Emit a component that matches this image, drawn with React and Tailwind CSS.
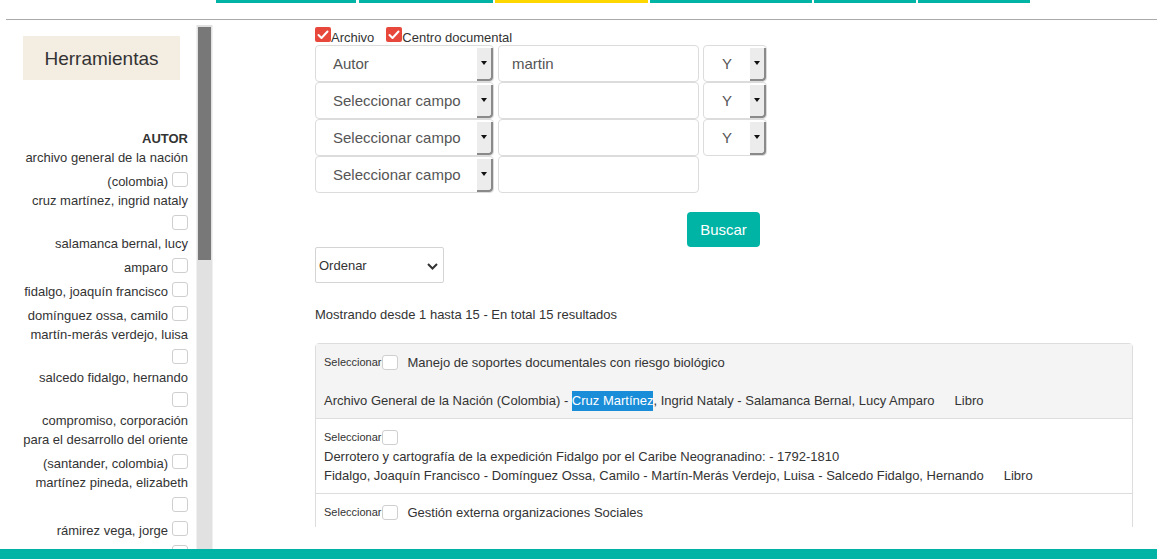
import React from "react";

function Box({ className = "" }) {
  return <span className={"inline-block w-[16px] h-[15px] border border-[#cfcfcf] rounded-[3px] bg-white shrink-0 " + className} />;
}

function RedCheck() {
  return (
    <span className="inline-flex items-center justify-center w-[16px] h-[15px] rounded-[2px] bg-[#e8473b] mb-[3px] shrink-0">
      <svg width="12" height="10" viewBox="0 0 12 10">
        <path d="M1.5 5 L4.5 8 L10.5 1.5" stroke="white" strokeWidth="2" fill="none" strokeLinecap="round" strokeLinejoin="round" />
      </svg>
    </span>
  );
}

function Line({ t, cb }) {
  if (!cb) return <div className="h-[19px] leading-[19px] whitespace-nowrap">{t}</div>;
  return (
    <div className="h-[24px] flex justify-end items-end whitespace-nowrap">
      {t && <span className="leading-[19px]">{t}</span>}
      <Box className="mb-[4px] ml-[4px]" />
    </div>
  );
}

const authorLines = [
  { t: "archivo general de la nación" },
  { t: "(colombia)", cb: true },
  { t: "cruz martínez, ingrid nataly" },
  { t: "", cb: true },
  { t: "salamanca bernal, lucy" },
  { t: "amparo", cb: true },
  { t: "fidalgo, joaquín francisco", cb: true },
  { t: "domínguez ossa, camilo", cb: true },
  { t: "martín-merás verdejo, luisa" },
  { t: "", cb: true },
  { t: "salcedo fidalgo, hernando" },
  { t: "", cb: true },
  { t: "compromiso, corporación" },
  { t: "para el desarrollo del oriente" },
  { t: "(santander, colombia)", cb: true },
  { t: "martínez pineda, elizabeth" },
  { t: "", cb: true },
  { t: "rámirez vega, jorge", cb: true },
  { t: "", cb: true },
];

function Arrow() {
  return (
    <div className="w-[16px] mt-[2px] bg-[#ececec] border-r-2 border-b-2 border-[#8a8a8a] rounded-br-[4px] flex items-center justify-center">
      <svg width="6" height="4" viewBox="0 0 6 4" className="mb-[2px]">
        <path d="M0 0 H6 L3 4 Z" fill="#111" />
      </svg>
    </div>
  );
}

function SelectBox({ label, w }) {
  return (
    <div className={"h-[37px] flex border border-[#dcdcdc] rounded-[4px] bg-white " + w}>
      <div className="flex-1 flex items-center pt-[2px] pl-[17px] text-[15px] text-[#555] whitespace-nowrap">{label}</div>
      <Arrow />
    </div>
  );
}

function YSelect() {
  return (
    <div className="h-[37px] w-[64px] flex border border-[#dcdcdc] rounded-[4px] bg-white">
      <div className="flex-1 flex items-center justify-center pt-[2px] text-[15px] text-[#555]">Y</div>
      <Arrow />
    </div>
  );
}

function Input({ value }) {
  return (
    <div className="h-[37px] w-[201px] flex items-center border border-[#dcdcdc] rounded-[4px] bg-white pl-[13px] pt-[2px] text-[15px] text-[#555]">
      {value}
    </div>
  );
}

function Sel() {
  return (
    <span className="inline-flex items-center">
      <span className="text-[11px]">Seleccionar</span>
      <Box className="ml-[1px]" />
    </span>
  );
}

export default function App() {
  return (
    <div className="w-[1157px] h-[559px] overflow-hidden bg-white flex flex-col text-[#333] font-['Liberation_Sans',Arial,sans-serif] text-[13px]">
      {/* top nav */}
      <div className="h-[19px] shrink-0 flex items-start pl-[216px]">
        <div className="h-[3px] w-[140px] bg-[#00b4a5]" />
        <div className="h-[3px] w-[134px] ml-[3px] bg-[#00b4a5]" />
        <div className="h-[3px] w-[153px] ml-[2px] bg-[#fed600]" />
        <div className="h-[3px] w-[162px] ml-[2px] bg-[#00b4a5]" />
        <div className="h-[3px] w-[102px] ml-[2px] bg-[#00b4a5]" />
        <div className="h-[3px] w-[112px] ml-[2px] bg-[#00b4a5]" />
      </div>
      <div className="h-px shrink-0 ml-[6px] bg-[#aaaaaa]" />

      <div className="flex-1 flex min-h-0">
        {/* sidebar */}
        <div className="ml-[6px] mt-[5px] flex min-h-0">
          <div className="w-[190px] overflow-hidden">
            <div className="ml-[17px] mt-[11px] w-[157px] h-[44px] pt-[3px] bg-[#f3ede2] flex items-center justify-center text-[19px] text-[#333]">
              Herramientas
            </div>
            <div className="mt-[49px] pr-[8px] text-right">
              <div className="h-[19px] leading-[19px] font-bold">AUTOR</div>
              {authorLines.map((l, i) => (
                <Line key={i} t={l.t} cb={l.cb} />
              ))}
            </div>
          </div>
          <div className="w-[17px] bg-[#e1e1e1] border-x border-[#f0f0f0] pt-[2px] px-[1px]">
            <div className="h-[233px] bg-[#787878]" />
          </div>
        </div>

        {/* main */}
        <div className="flex-1 pl-[102px] pt-[7px] min-w-0">
          <div className="h-[18px] flex items-end">
            <RedCheck />
            <span className="leading-[15px]">Archivo</span>
            <span className="ml-[12px] flex items-end">
              <RedCheck />
              <span className="leading-[15px]">Centro documental</span>
            </span>
          </div>

          <div className="flex flex-col">
            <div className="flex gap-[4px]">
              <SelectBox label="Autor" w="w-[179px]" />
              <Input value="martin" />
              <YSelect />
            </div>
            <div className="flex gap-[4px]">
              <SelectBox label="Seleccionar campo" w="w-[179px]" />
              <Input value="" />
              <YSelect />
            </div>
            <div className="flex gap-[4px]">
              <SelectBox label="Seleccionar campo" w="w-[179px]" />
              <Input value="" />
              <YSelect />
            </div>
            <div className="flex gap-[4px]">
              <SelectBox label="Seleccionar campo" w="w-[179px]" />
              <Input value="" />
            </div>
          </div>

          <div className="mt-[19px] ml-[372px] w-[73px] h-[35px] pt-[2px] rounded-[4px] bg-[#00b4a5] text-white text-[15px] flex items-center justify-center">
            Buscar
          </div>

          <div className="w-[129px] h-[36px] border border-[#d4d4d4] rounded-[2px] flex items-center justify-between pt-[2px] pl-[3px] pr-[5px] bg-white">
            <span>Ordenar</span>
            <svg width="11" height="7" viewBox="0 0 11 7">
              <path d="M1 1 L5.5 5.5 L10 1" stroke="#333" strokeWidth="2" fill="none" />
            </svg>
          </div>

          <div className="mt-[22px] leading-[19px]">Mostrando desde 1 hasta 15 - En total 15 resultados</div>

          <div className="mt-[19px] w-[818px] h-[184px] overflow-hidden">
            <div className="border border-[#dddddd] rounded-t-[4px]">
              <div className="bg-[#f4f4f4] pt-[9px] pb-[8px] pl-[8px] pr-[9px] border-b border-[#dddddd]">
                <div className="h-[19px] flex items-center">
                  <Sel />
                  <span className="ml-[9px]">Manejo de soportes documentales con riesgo biológico</span>
                </div>
                <div className="h-[19px]" />
                <div className="h-[19px] leading-[19px] whitespace-nowrap">
                  Archivo General de la Nación (Colombia) -{" "}
                  <span className="bg-[#1a8dd8] text-white inline-block leading-[20px]">Cruz Martínez</span>, Ingrid Nataly - Salamanca Bernal, Lucy Amparo
                  <span className="ml-[20px]">Libro</span>
                </div>
              </div>
              <div className="bg-white pt-[9px] pb-[8px] pl-[8px] pr-[9px] border-b border-[#dddddd]">
                <div className="h-[19px] flex items-center">
                  <Sel />
                </div>
                <div className="h-[19px] leading-[19px] whitespace-nowrap">
                  Derrotero y cartografía de la expedición Fidalgo por el Caribe Neogranadino: - 1792-1810
                </div>
                <div className="h-[19px] leading-[19px] whitespace-nowrap">
                  Fidalgo, Joaquín Francisco - Domínguez Ossa, Camilo - Martín-Merás Verdejo, Luisa - Salcedo Fidalgo, Hernando
                  <span className="ml-[20px]">Libro</span>
                </div>
              </div>
              <div className="bg-white pt-[9px] pb-[8px] pl-[8px] pr-[9px]">
                <div className="h-[19px] flex items-center">
                  <Sel />
                  <span className="ml-[9px]">Gestión externa organizaciones Sociales</span>
                </div>
              </div>
            </div>
          </div>
        </div>
      </div>

      <div className="h-[10px] shrink-0 bg-[#00b4a5]" />
    </div>
  );
}
